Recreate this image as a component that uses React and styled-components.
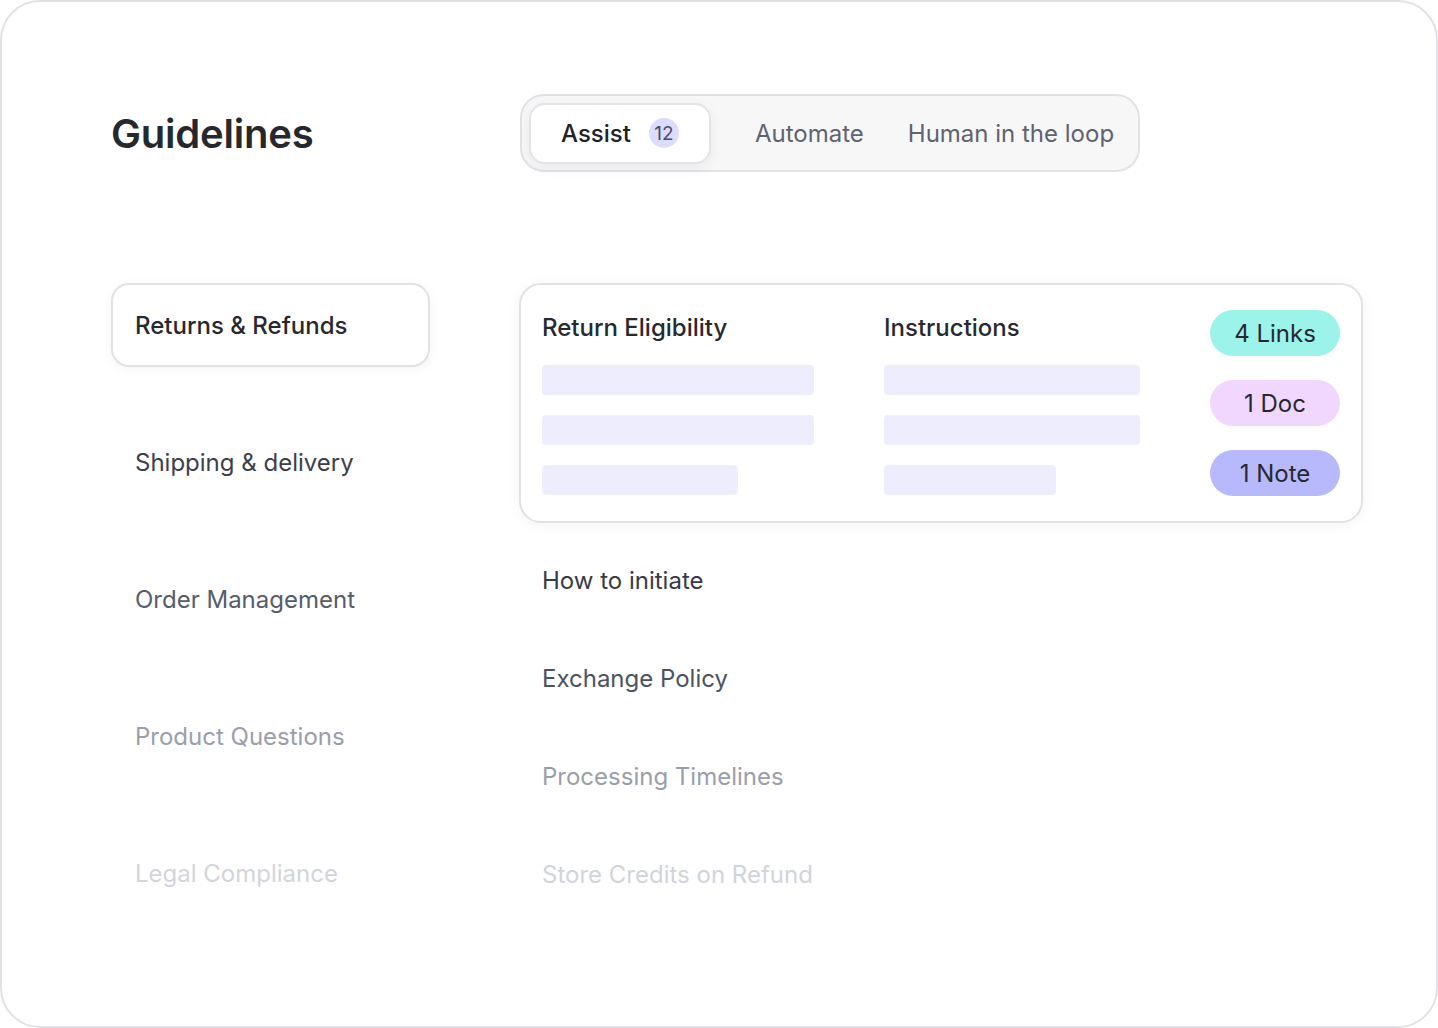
import React from "react";
import styled, { createGlobalStyle } from "styled-components";

const Global = createGlobalStyle`
  * { box-sizing: border-box; }
  html, body { margin: 0; padding: 0; background: #ffffff; }
  body { font-family: Inter, "Noto Sans", sans-serif; -webkit-font-smoothing: antialiased; }
`;

const Frame = styled.div`
  width: 1438px;
  height: 1028px;
  border: 2px solid #e2e2e6;
  border-radius: 40px;
  background: #ffffff;
  padding: 92px 73px 0 109px;
`;

const Header = styled.header`
  display: grid;
  grid-template-columns: 409px auto;
  align-items: center;
`;

const Title = styled.h1`
  margin: 0;
  font-size: 40px;
  font-weight: 600;
  color: #26282e;
  letter-spacing: -0.2px;
`;

const TabBar = styled.div`
  display: inline-flex;
  align-items: center;
  justify-self: start;
  width: 620px;
  height: 78px;
  padding: 6px 0 6px 7px;
  gap: 44px;
  background: #f7f7f8;
  border: 2px solid #e2e2e6;
  border-radius: 24px;
  white-space: nowrap;
`;

const ActiveTab = styled.div`
  display: flex;
  align-items: center;
  flex-shrink: 0;
  gap: 18px;
  height: 61px;
  padding: 0 30px;
  background: #ffffff;
  border: 2px solid #e4e4e8;
  border-radius: 16px;
  box-shadow: 0 4px 14px rgba(20, 20, 40, 0.06);
  font-size: 24px;
  font-weight: 500;
  color: #1f2128;
`;

const Badge = styled.span`
  width: 30px;
  height: 30px;
  border-radius: 50%;
  background: #dcdcfd;
  color: #4a4b66;
  font-size: 19px;
  font-weight: 400;
  display: flex;
  align-items: center;
  justify-content: center;
`;

const Tab = styled.div`
  flex-shrink: 0;
  font-size: 24px;
  font-weight: 400;
  color: #5f6270;
`;

const Body = styled.div`
  display: grid;
  grid-template-columns: 408px 844px;
  margin-top: 111px;
`;

const Nav = styled.nav`
  display: flex;
  flex-direction: column;
  gap: 53px;
  width: 319px;
`;

const NavItem = styled.div`
  height: 84px;
  display: flex;
  align-items: center;
  padding: 0 22px;
  border: 2px solid ${(p) => (p.$active ? "#e2e2e6" : "transparent")};
  border-radius: 18px;
  background: #ffffff;
  box-shadow: ${(p) => (p.$active ? "0 2px 12px rgba(20,20,40,0.05)" : "none")};
  font-size: 24px;
  font-weight: ${(p) => (p.$active ? 500 : 400)};
  color: ${(p) => p.$color};
`;

const Main = styled.div`
  display: flex;
  flex-direction: column;
`;

const Card = styled.div`
  height: 240px;
  display: flex;
  gap: 70px;
  padding: 25px 21px;
  border: 2px solid #e2e2e6;
  border-radius: 22px;
  background: #ffffff;
  box-shadow: 0 2px 14px rgba(20, 20, 40, 0.05);
`;

const Column = styled.div`
  width: ${(p) => p.$w}px;
  display: flex;
  flex-direction: column;
  gap: 20px;
`;

const ColTitle = styled.div`
  height: 35px;
  line-height: 35px;
  font-size: 24px;
  font-weight: 500;
  color: #27292f;
`;

const Bar = styled.div`
  height: 30px;
  width: ${(p) => p.$w}px;
  background: #ededfd;
  border-radius: 4px;
`;

const Pills = styled.div`
  margin-left: auto;
  display: flex;
  flex-direction: column;
  gap: 24px;
`;

const Pill = styled.div`
  width: 130px;
  height: 46px;
  border-radius: 23px;
  background: ${(p) => p.$bg};
  display: flex;
  align-items: center;
  justify-content: center;
  font-size: 24px;
  font-weight: 400;
  color: #27282d;
`;

const SubList = styled.div`
  display: flex;
  flex-direction: column;
  margin-top: 8px;
`;

const SubItem = styled.div`
  height: 98px;
  display: flex;
  align-items: center;
  padding-left: 23px;
  font-size: 24px;
  color: ${(p) => p.$color};
`;

const navItems = [
  { label: "Returns & Refunds", color: "#27292f", active: true },
  { label: "Shipping & delivery", color: "#3c404c" },
  { label: "Order Management", color: "#575c69" },
  { label: "Product Questions", color: "#9a9eaa" },
  { label: "Legal Compliance", color: "#d3d5db" },
];

const subItems = [
  { label: "How to initiate", color: "#383b45" },
  { label: "Exchange Policy", color: "#4d5260" },
  { label: "Processing Timelines", color: "#9a9eaa" },
  { label: "Store Credits on Refund", color: "#d1d4da" },
];

export default function App() {
  return (
    <>
      <Global />
      <Frame>
        <Header>
          <Title>Guidelines</Title>
          <TabBar>
            <ActiveTab>
              Assist <Badge>12</Badge>
            </ActiveTab>
            <Tab>Automate</Tab>
            <Tab>Human in the loop</Tab>
          </TabBar>
        </Header>
        <Body>
          <Nav>
            {navItems.map((n) => (
              <NavItem key={n.label} $active={n.active} $color={n.color}>
                {n.label}
              </NavItem>
            ))}
          </Nav>
          <Main>
            <Card>
              <Column $w={272}>
                <ColTitle>Return Eligibility</ColTitle>
                <Bar $w={272} />
                <Bar $w={272} />
                <Bar $w={196} />
              </Column>
              <Column $w={256}>
                <ColTitle>Instructions</ColTitle>
                <Bar $w={256} />
                <Bar $w={256} />
                <Bar $w={172} />
              </Column>
              <Pills>
                <Pill $bg="#9bf3e9">4 Links</Pill>
                <Pill $bg="#f1d6fd">1 Doc</Pill>
                <Pill $bg="#b8b9fd">1 Note</Pill>
              </Pills>
            </Card>
            <SubList>
              {subItems.map((s) => (
                <SubItem key={s.label} $color={s.color}>
                  {s.label}
                </SubItem>
              ))}
            </SubList>
          </Main>
        </Body>
      </Frame>
    </>
  );
}
